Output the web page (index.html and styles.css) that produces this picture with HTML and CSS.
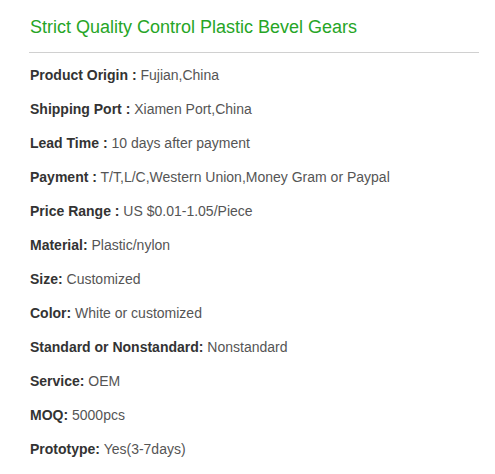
FILE: index.html
```html
<!DOCTYPE html>
<html>
<head>
<meta charset="utf-8">
<link rel="stylesheet" href="styles.css">
</head>
<body>
<div class="wrap">
  <h1 class="title">Strict Quality Control Plastic Bevel Gears</h1>
  <ul class="specs">
    <li><b>Product Origin :</b> Fujian,China</li>
    <li><b>Shipping Port :</b> Xiamen Port,China</li>
    <li><b>Lead Time :</b> 10 days after payment</li>
    <li><b>Payment :</b> T/T,L/C,Western Union,Money Gram or Paypal</li>
    <li><b>Price Range :</b> US $0.01-1.05/Piece</li>
    <li><b>Material:</b> Plastic/nylon</li>
    <li><b>Size:</b> Customized</li>
    <li><b>Color:</b> White or customized</li>
    <li><b>Standard or Nonstandard:</b> Nonstandard</li>
    <li><b>Service:</b> OEM</li>
    <li><b>MOQ:</b> 5000pcs</li>
    <li><b>Prototype:</b> Yes(3-7days)</li>
  </ul>
</div>
</body>
</html>
```
FILE: styles.css
```css
html, body {
  margin: 0;
  padding: 0;
  background: #fff;
}
body {
  font-family: "Liberation Sans", Arial, sans-serif;
}
.wrap {
  width: 450px;
  margin-left: 29px;
}
.title {
  margin: 0;
  padding: 16px 0 14px 1px;
  font-size: 18px;
  line-height: 22px;
  font-weight: normal;
  color: #26a526;
  border-bottom: 1px solid #d0d0d0;
}
.specs {
  list-style: none;
  margin: 5px 0 0;
  padding: 0 0 0 1px;
}
.specs li {
  font-size: 14px;
  line-height: 34px;
  color: #555;
}
.specs b {
  color: #333;
}
```
